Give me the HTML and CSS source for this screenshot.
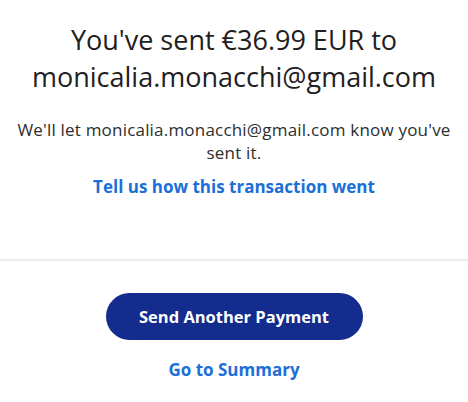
FILE: index.html
```html
<!DOCTYPE html>
<html>
<head>
<meta charset="utf-8">
<link rel="stylesheet" href="styles.css">
</head>
<body>
<main class="page">
  <section class="top">
    <h1 class="title">You've sent €36.99 EUR to monicalia.monacchi@gmail.com</h1>
    <p class="note">We'll let monicalia.monacchi@gmail.com know you've sent it.</p>
    <a class="link" href="#">Tell us how this transaction went</a>
  </section>
  <hr class="divider">
  <section class="actions">
    <button class="btn">Send Another Payment</button>
    <a class="link" href="#">Go to Summary</a>
  </section>
</main>
</body>
</html>
```

FILE: styles.css
```css
html, body {
  margin: 0;
  padding: 0;
  background: #fff;
}
body {
  font-family: "Open Sans", "Noto Sans", sans-serif;
  color: #2c2e2f;
  width: 468px;
}
.page {
  display: flex;
  flex-direction: column;
}
.top {
  display: flex;
  flex-direction: column;
  align-items: center;
  text-align: center;
  padding: 21px 8px 0;
}
.title {
  margin: 0;
  font-size: 27px;
  font-weight: 400;
  line-height: 37px;
  color: #1f2021;
}
.note {
  margin: 23px 0 0;
  font-size: 17px;
  letter-spacing: 0.2px;
  line-height: 23px;
  color: #2c2e2f;
}
.link {
  color: #1b6fd8;
  font-weight: 700;
  font-size: 17px;
  text-decoration: none;
  line-height: 20px;
}
.top .link {
  margin-top: 13px;
}
.divider {
  margin: 62px 0 0;
  border: 0;
  height: 2px;
  background: #ececec;
}
.actions {
  display: flex;
  flex-direction: column;
  align-items: center;
  padding-top: 32px;
  gap: 20px;
}
.btn {
  width: 257px;
  height: 47px;
  border: 0;
  border-radius: 24px;
  background: #142c8e;
  color: #fff;
  font-family: inherit;
  font-weight: 700;
  font-size: 16.5px;
}
```
